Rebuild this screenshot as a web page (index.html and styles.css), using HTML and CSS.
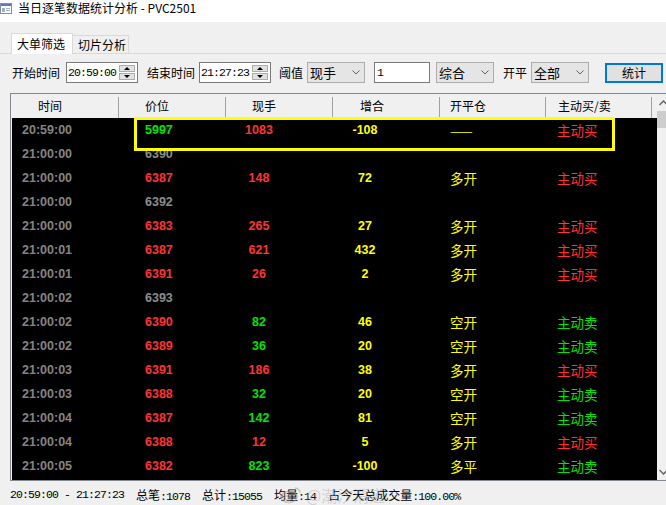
FILE: index.html
```html
<!DOCTYPE html>
<html lang="zh-CN">
<head>
<meta charset="utf-8">
<title>当日逐笔数据统计分析 - PVC2501</title>
<link rel="stylesheet" href="styles.css">
</head>
<body>
<div class="titlebar">
  <svg class="appicon" width="12" height="11" viewBox="0 0 12 11">
    <rect x="0.5" y="0.5" width="11" height="10" fill="#ffffff" stroke="#7b8fa8"/>
    <rect x="1" y="1" width="10" height="2" fill="#5b7fb5"/>
    <rect x="2" y="5" width="3" height="4" fill="#9fb3cc"/>
    <rect x="6" y="5" width="4" height="1" fill="#9fb3cc"/>
    <rect x="6" y="7" width="4" height="1" fill="#9fb3cc"/>
  </svg>
  <span class="title">当日逐笔数据统计分析 - PVC2501</span>
</div>

<div class="tabs">
  <div class="tab active">大单筛选</div>
  <div class="tab">切片分析</div>
</div>

<div class="panel">
  <div class="controls">
    <span class="lbl">开始时间</span>
    <div class="timebox ml6"><span class="mono">20:59:00</span><div class="spin"><div class="sb"><i class="tri-up"></i></div><div class="sb"><i class="tri-down"></i></div></div></div>
    <span class="lbl ml9">结束时间</span>
    <div class="timebox ml4"><span class="mono">21:27:23</span><div class="spin"><div class="sb"><i class="tri-up"></i></div><div class="sb"><i class="tri-down"></i></div></div></div>
    <span class="lbl ml8">阈值</span>
    <div class="select ml4"><span>现手</span><svg class="chev" width="8" height="5" viewBox="0 0 8 5"><polyline points="0.5,0.5 4,4 7.5,0.5" fill="none" stroke="#606060" stroke-width="1"/></svg></div>
    <div class="numbox ml9"><span class="mono">1</span></div>
    <div class="select ml6"><span>综合</span><svg class="chev" width="8" height="5" viewBox="0 0 8 5"><polyline points="0.5,0.5 4,4 7.5,0.5" fill="none" stroke="#606060" stroke-width="1"/></svg></div>
    <span class="lbl ml9">开平</span>
    <div class="select ml4"><span>全部</span><svg class="chev" width="8" height="5" viewBox="0 0 8 5"><polyline points="0.5,0.5 4,4 7.5,0.5" fill="none" stroke="#606060" stroke-width="1"/></svg></div>
    <div class="btn ml16">统计</div>
  </div>

  <div class="table">
    <div class="main">
      <div class="thead">
        <div class="th h1">时间</div>
        <div class="th h2">价位</div>
        <div class="th h3">现手</div>
        <div class="th h4">增合</div>
        <div class="th h5">开平仓</div>
        <div class="th h6">主动买/卖</div>
        <div class="th-rest"></div>
      </div>
      <div class="tbody">
        <div class="row"><span class="t">20:59:00</span><span class="p g">5997</span><span class="v r">1083</span><span class="d">-108</span><span class="k">——</span><span class="s r">主动买</span></div>
        <div class="row"><span class="t">21:00:00</span><span class="p gr">6390</span><span class="v"></span><span class="d"></span><span class="k"></span><span class="s"></span></div>
        <div class="row"><span class="t">21:00:00</span><span class="p r">6387</span><span class="v r">148</span><span class="d">72</span><span class="k">多开</span><span class="s r">主动买</span></div>
        <div class="row"><span class="t">21:00:00</span><span class="p gr">6392</span><span class="v"></span><span class="d"></span><span class="k"></span><span class="s"></span></div>
        <div class="row"><span class="t">21:00:00</span><span class="p r">6383</span><span class="v r">265</span><span class="d">27</span><span class="k">多开</span><span class="s r">主动买</span></div>
        <div class="row"><span class="t">21:00:01</span><span class="p r">6387</span><span class="v r">621</span><span class="d">432</span><span class="k">多开</span><span class="s r">主动买</span></div>
        <div class="row"><span class="t">21:00:01</span><span class="p r">6391</span><span class="v r">26</span><span class="d">2</span><span class="k">多开</span><span class="s r">主动买</span></div>
        <div class="row"><span class="t">21:00:02</span><span class="p gr">6393</span><span class="v"></span><span class="d"></span><span class="k"></span><span class="s"></span></div>
        <div class="row"><span class="t">21:00:02</span><span class="p r">6390</span><span class="v g">82</span><span class="d">46</span><span class="k">空开</span><span class="s g">主动卖</span></div>
        <div class="row"><span class="t">21:00:02</span><span class="p r">6389</span><span class="v g">36</span><span class="d">20</span><span class="k">空开</span><span class="s g">主动卖</span></div>
        <div class="row"><span class="t">21:00:03</span><span class="p r">6391</span><span class="v r">186</span><span class="d">38</span><span class="k">多开</span><span class="s r">主动买</span></div>
        <div class="row"><span class="t">21:00:03</span><span class="p r">6388</span><span class="v g">32</span><span class="d">20</span><span class="k">空开</span><span class="s g">主动卖</span></div>
        <div class="row"><span class="t">21:00:04</span><span class="p r">6387</span><span class="v g">142</span><span class="d">81</span><span class="k">空开</span><span class="s g">主动卖</span></div>
        <div class="row"><span class="t">21:00:04</span><span class="p r">6388</span><span class="v r">12</span><span class="d">5</span><span class="k">多开</span><span class="s r">主动买</span></div>
        <div class="row"><span class="t">21:00:05</span><span class="p r">6382</span><span class="v g">823</span><span class="d">-100</span><span class="k">多平</span><span class="s g">主动卖</span></div>
      </div>
    </div>
    <div class="vscroll">
      <div class="sbtn"><svg width="9" height="6" viewBox="0 0 9 6"><polyline points="0.5,5 4.5,1 8.5,5" fill="none" stroke="#606060" stroke-width="1.3"/></svg></div>
      <div class="thumb"></div>
      <div class="track"></div>
      <div class="sbtn"><svg width="9" height="6" viewBox="0 0 9 6"><polyline points="0.5,1 4.5,5 8.5,1" fill="none" stroke="#606060" stroke-width="1.3"/></svg></div>
    </div>
    <div class="highlight"></div>
  </div>
</div>

<div class="status">
  <span class="mono">20:59:00 - 21:27:23</span>
  <span><span class="cj">总笔</span><span class="mono">:1078</span></span>
  <span><span class="cj">总计</span><span class="mono">:15055</span></span>
  <span><span class="cj">均量</span><span class="mono">:14</span></span>
  <span><span class="cj">占今天总成交量</span><span class="mono">:100.00%</span></span>
</div>

<div class="watermark">
  <svg width="22" height="18" viewBox="0 0 22 18"><ellipse cx="9" cy="11" rx="8" ry="5.5" fill="none" stroke="rgba(150,150,150,0.5)" stroke-width="1.5"/><ellipse cx="8" cy="12" rx="3" ry="2.2" fill="none" stroke="rgba(150,150,150,0.5)" stroke-width="1.2"/><path d="M15 2 a5 5 0 0 1 5 5" fill="none" stroke="rgba(150,150,150,0.5)" stroke-width="1.3"/></svg>
  <span>@潮汐渭道</span>
</div>
</body>
</html>
```

FILE: styles.css
```css
* { box-sizing: border-box; margin: 0; padding: 0; }
html, body { width: 666px; height: 505px; overflow: hidden; }
body {
  background: #f0f0f0;
  font-family: "Noto Sans CJK SC", "Liberation Sans", sans-serif;
  font-size: 12px;
  color: #000;
  position: relative;
}

.titlebar {
  height: 22px;
  background: #ffffff;
  display: flex;
  align-items: flex-start;
  padding-top: 1px;
}
.appicon { margin: 2px 6px 0 0; flex: none; }
.title { font-size: 12px; line-height: 14px; }

.tabs {
  margin-top: 11px;
  padding-left: 11px;
  display: flex;
  align-items: flex-end;
  border-bottom: 1px solid #d9d9d9;
  height: 21px;
}
.tab {
  height: 18px;
  display: flex;
  align-items: center;
  border: 1px solid #d9d9d9;
  border-left: none;
  border-bottom: none;
  padding: 0 2px 0 5px;
  background: #f0f0f0;
  font-size: 12px;
}
.tab.active {
  height: 21px;
  margin-bottom: -1px;
  border-left: 1px solid #d9d9d9;
  background: #ffffff;
  padding: 0 7px 1px 5px;
}

.panel { padding-left: 10px; }

.controls {
  margin-top: 8px;
  height: 21px;
  display: flex;
  align-items: center;
  padding-left: 2px;
}
.lbl { font-size: 12px; line-height: 21px; }
.ml4 { margin-left: 4px; }
.ml6 { margin-left: 6px; }
.ml8 { margin-left: 8px; }
.ml9 { margin-left: 9px; }
.ml16 { margin-left: 16px; }

.mono {
  font-family: "Liberation Mono", monospace;
  font-size: 11.5px;
  letter-spacing: -0.9px;
}

.timebox {
  width: 72px;
  height: 21px;
  border: 1px solid #7a7a7a;
  background: #fff;
  display: flex;
  align-items: center;
  padding-left: 1px;
}
.spin {
  margin-left: auto;
  margin-right: 2px;
  width: 16px;
  height: 15px;
  display: flex;
  flex-direction: column;
  gap: 1px;
}
.sb {
  flex: 1;
  background: #e1e1e1;
  border: 1px solid #adadad;
  display: flex;
  align-items: center;
  justify-content: center;
}
.tri-up {
  width: 0; height: 0;
  border-left: 3px solid transparent;
  border-right: 3px solid transparent;
  border-bottom: 3px solid #000;
}
.tri-down {
  width: 0; height: 0;
  border-left: 3px solid transparent;
  border-right: 3px solid transparent;
  border-top: 3px solid #000;
}

.select {
  width: 58px;
  height: 21px;
  background: #e5e5e5;
  border: 1px solid #adadad;
  display: flex;
  align-items: center;
  padding-left: 2px;
  font-size: 13px;
}
.chev { margin-left: auto; margin-right: 4px; }

.numbox {
  width: 56px;
  height: 21px;
  border: 1px solid #7a7a7a;
  background: #fff;
  display: flex;
  align-items: center;
  padding-left: 2px;
}

.btn {
  width: 58px;
  height: 20px;
  border: 2px solid #0078d7;
  background: #e1e1e1;
  display: flex;
  align-items: center;
  justify-content: center;
  font-size: 12px;
}

.table {
  margin-top: 10px;
  width: 680px;
  border: 1px solid #828790;
  display: flex;
  position: relative;
  background: #f0f0f0;
}
.main { width: 646px; flex: none; }
.thead {
  height: 24px;
  display: grid;
  grid-template-columns: 108px 107px 107px 107px 106px 106px 5px;
  background: #f0f0f0;
}
.th {
  font-size: 12px;
  line-height: 24px;
  background: linear-gradient(#a0a0a0, #a0a0a0) right 3px / 1px 21px no-repeat;
}
.h1 { padding-left: 27px; }
.h2 { padding-left: 26px; }
.h3 { padding-left: 26px; }
.h4 { padding-left: 27px; }
.h5 { padding-left: 10px; }
.h6 { padding-left: 12px; }

.tbody {
  height: 362px;
  background: #000;
  margin-left: 1px;
}
.row {
  height: 24px;
  display: grid;
  grid-template-columns: 107px 107px 107px 107px 106px 106px 5px;
  align-items: center;
  font-family: "Liberation Sans", Arial, sans-serif;
  font-weight: bold;
  font-size: 12.5px;
  line-height: 24px;
}
.t { padding-left: 10px; color: #858585; }
.p { padding-left: 26px; }
.v { padding-right: 41px; text-align: center; }
.d { padding-right: 43px; text-align: center; color: #ffff00; }
.k, .s {
  font-family: "Noto Sans CJK SC", sans-serif;
  font-weight: normal;
  font-size: 13.5px;
}
.k { padding-left: 10px; color: #ffff00; }
.s { padding-left: 11px; }

.r { color: #ff3434; }
.g { color: #00e400; }
.gr { color: #8c8c8c; }

.vscroll {
  width: 17px;
  flex: none;
  display: flex;
  flex-direction: column;
  background: #f0f0f0;
}
.sbtn {
  height: 17px;
  display: flex;
  align-items: center;
  padding-left: 2px;
}
.thumb { height: 17px; background: #cdcdcd; }
.track { flex: 1; }

.highlight {
  position: absolute;
  left: 123px;
  top: 23px;
  width: 481px;
  height: 34px;
  border: 3px solid #ffff00;
}

.status {
  height: 24px;
  display: flex;
  align-items: center;
  gap: 12px;
  padding-left: 10px;
  padding-top: 2px;
}
.cj { font-size: 12px; }

.watermark {
  position: absolute;
  left: 280px;
  top: 483px;
  display: flex;
  align-items: center;
  gap: 4px;
  font-size: 16px;
  color: rgba(170, 170, 170, 0.45);
}
```
